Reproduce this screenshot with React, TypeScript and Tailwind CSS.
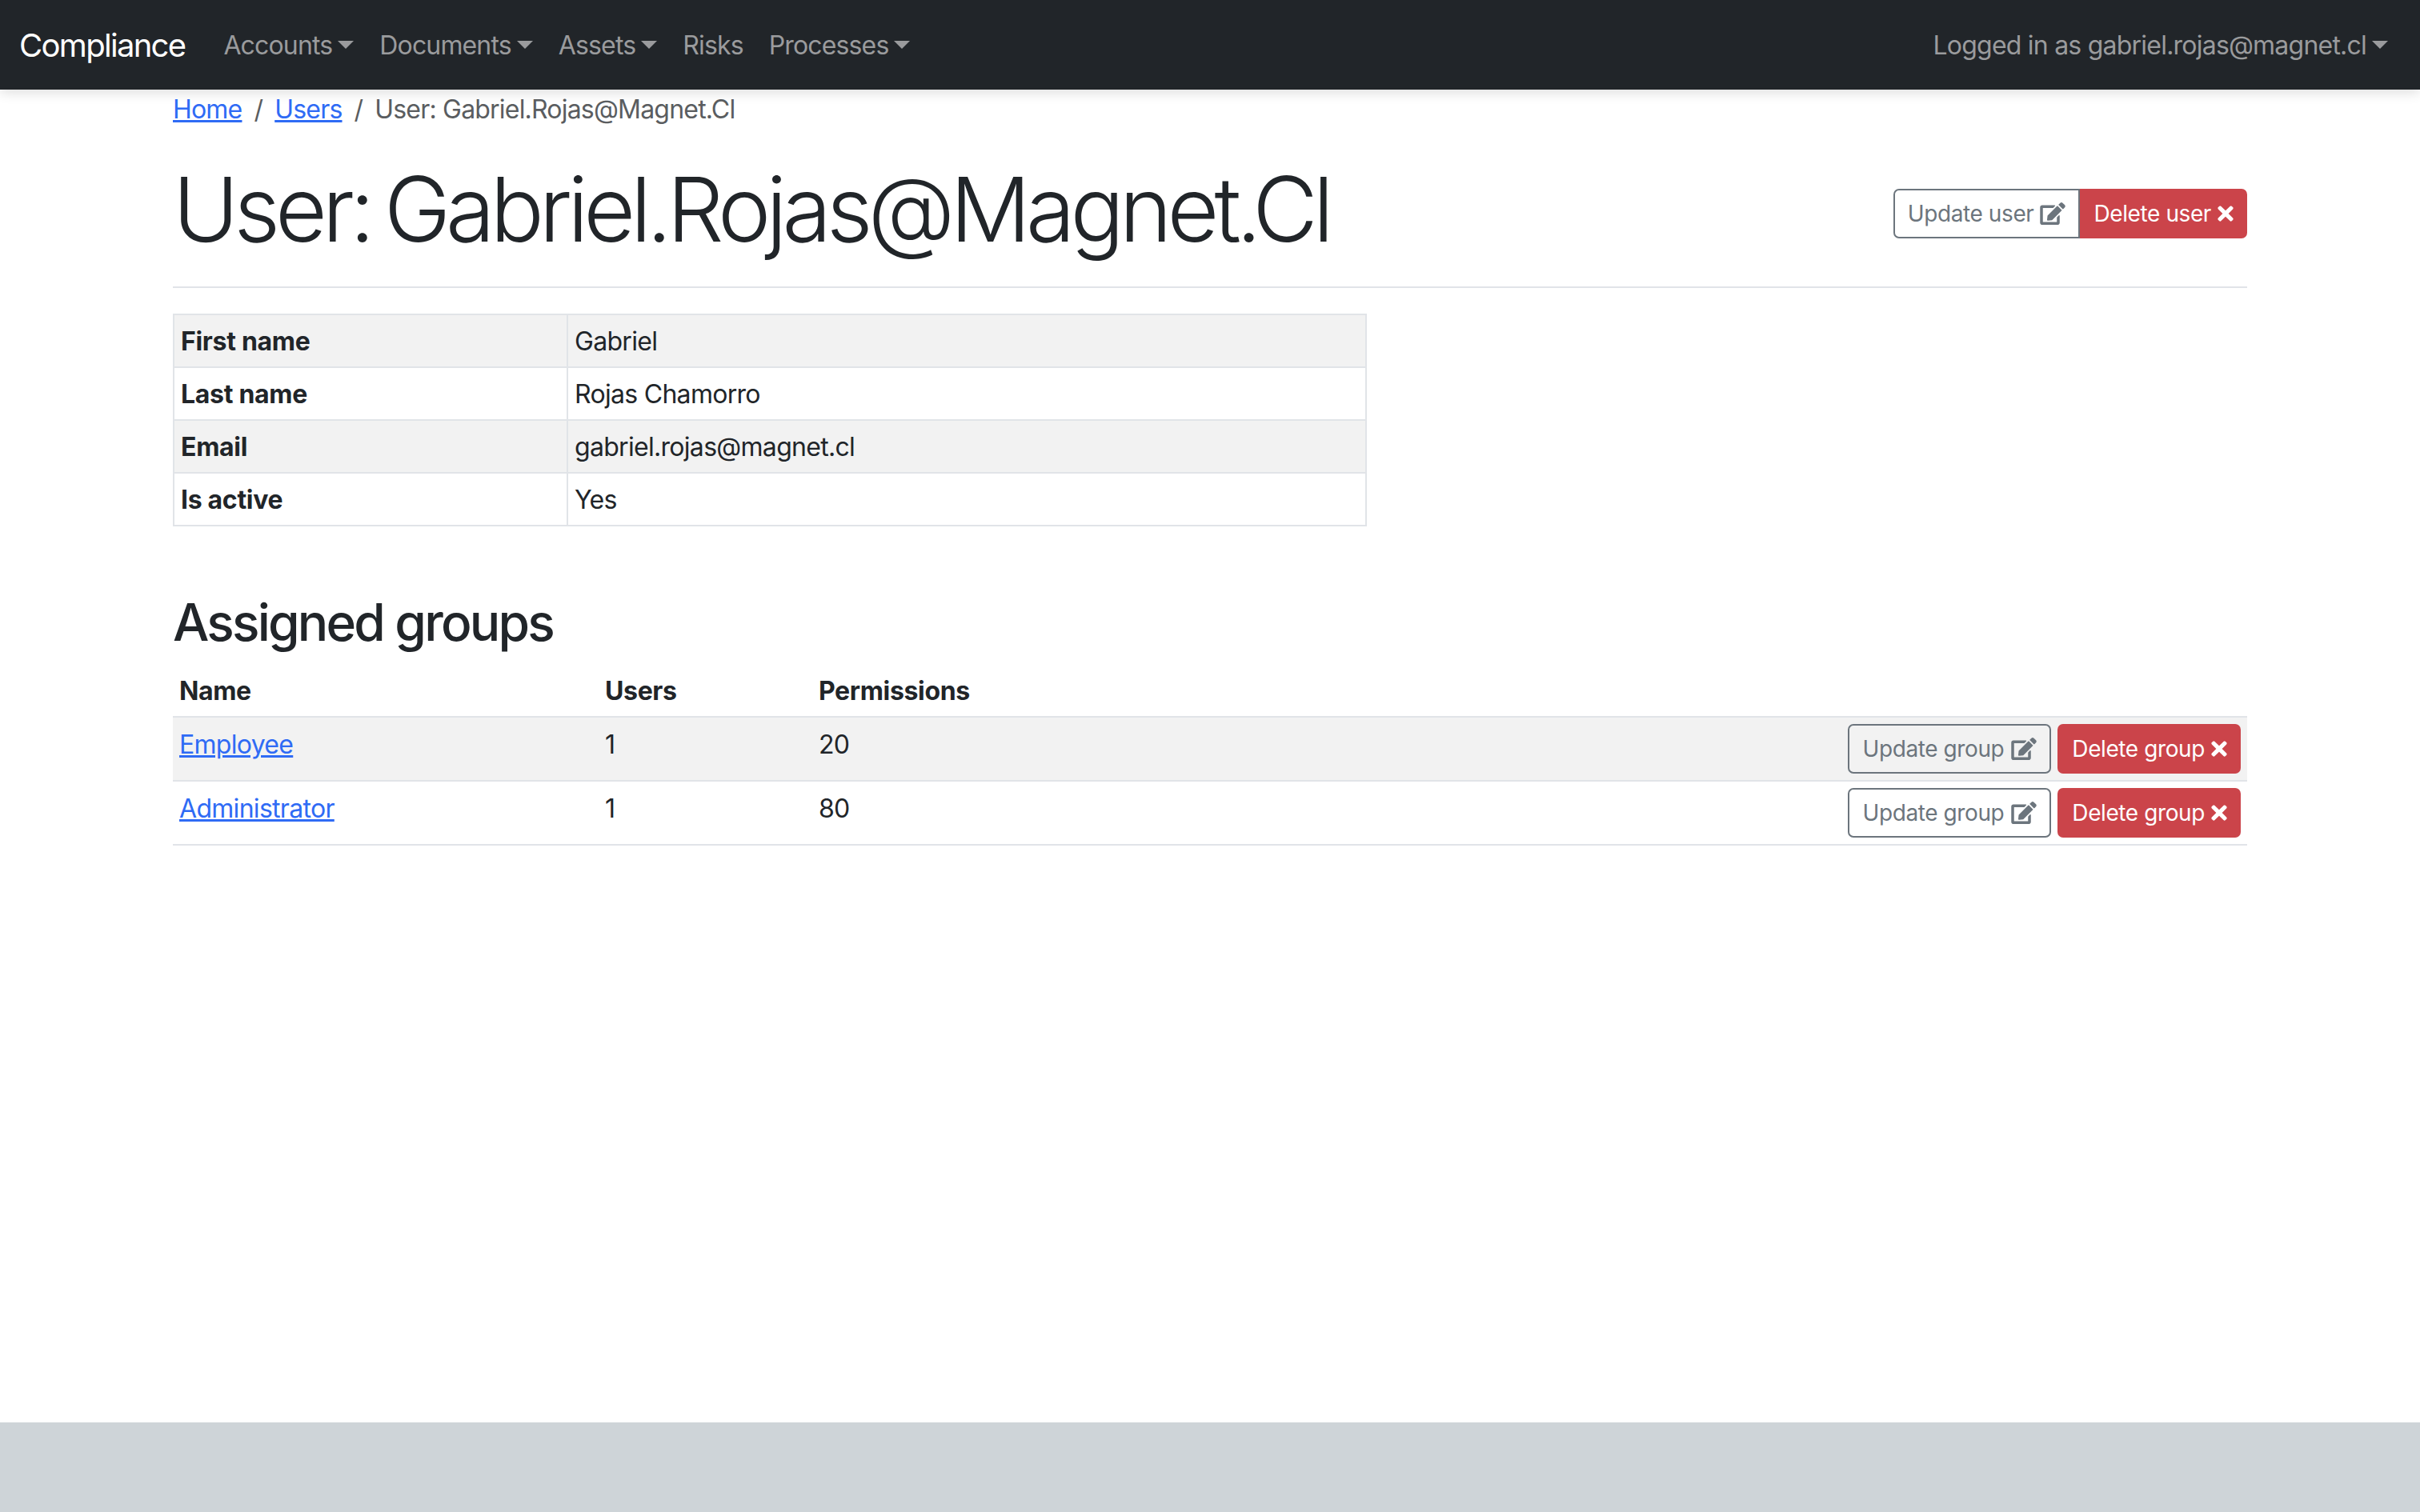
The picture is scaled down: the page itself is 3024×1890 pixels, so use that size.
import { FaEdit, FaTimes } from "react-icons/fa";

function Caret() {
  return <span className="ml-[7px] inline-block h-0 w-0 translate-y-[-1px] border-x-[10px] border-t-[10px] border-x-transparent border-t-current align-middle" />;
}

function NavItem({ label, caret = true }: { label: string; caret?: boolean }) {
  return (
    <span className="flex items-center px-[16px] text-[32px] leading-[48px] tracking-[-0.85px] text-[#9a9b9d]">
      {label}
      {caret && <Caret />}
    </span>
  );
}

function UpdateButton({ label, grouped = false }: { label: string; grouped?: boolean }) {
  return (
    <span className={`flex h-[62px] items-center border-2 border-[#6c757d] pr-[16px] pl-[16px] text-[28px] tracking-[-0.4px] text-[#6c757d] ${grouped ? "gap-[8px] rounded-l-[7px]" : "gap-[9px] rounded-[7px]"}`}>
      {label}
      <FaEdit className="h-[28px] w-[32px]" />
    </span>
  );
}

function DeleteButton({ label, grouped = false }: { label: string; grouped?: boolean }) {
  return (
    <span className={`flex h-[62px] items-center gap-[7px] bg-[#cb444a] pr-[16px] text-[28px] tracking-[-0.4px] text-white ${grouped ? "rounded-r-[7px] pl-[17px]" : "rounded-[7px] pl-[18px]"}`}>
      {label}
      <FaTimes className="h-[28px] w-[22px]" />
    </span>
  );
}

const info = [
  ["First name", "Gabriel"],
  ["Last name", "Rojas Chamorro"],
  ["Email", "gabriel.rojas@magnet.cl"],
  ["Is active", "Yes"],
];

const groups = [
  ["Employee", "1", "20"],
  ["Administrator", "1", "80"],
];

export default function App() {
  return (
    <div className="flex h-[1890px] flex-col bg-white font-['Inter',sans-serif] text-[32px] text-[#212529]">
      <nav className="flex h-[112px] shrink-0 items-center justify-between bg-[#212529] pt-[2px] pr-[40px] pl-[24px] shadow-[0_4px_14px_rgba(0,0,0,0.13)]">
        <div className="flex items-center">
          <span className="mr-[32px] text-[40px] tracking-[-1.7px] text-white">Compliance</span>
          <NavItem label="Accounts" />
          <NavItem label="Documents" />
          <NavItem label="Assets" />
          <NavItem label="Risks" caret={false} />
          <NavItem label="Processes" />
        </div>
        <div className="flex items-center">
          <span className="flex items-center text-[32px] tracking-[-0.78px] text-[#9a9b9d]">
            Logged in as gabriel.rojas@magnet.cl
            <Caret />
          </span>
        </div>
      </nav>

      <main className="mx-[216px] flex-1">
        <div className="flex h-[48px] items-center pt-[2px] tracking-[-0.8px] text-[#5a5d60]">
          <a className="text-[#2f6bf5] underline decoration-[3px]">Home</a>
          <span className="px-[15px]">/</span>
          <a className="text-[#2f6bf5] underline decoration-[3px]">Users</a>
          <span className="px-[15px]">/</span>
          <span>User: Gabriel.Rojas@Magnet.Cl</span>
        </div>

        <div className="mt-[20px] flex h-[180px] items-start justify-between border-b-2 border-[#e1e4e8]">
          <h1 className="pt-[14px] text-[112px] leading-[134px] font-light tracking-[-6.1px] [word-spacing:-8px]">User: Gabriel.Rojas@Magnet.Cl</h1>
          <div className="mt-[56px] flex">
            <UpdateButton label="Update user" grouped />
            <DeleteButton label="Delete user" grouped />
          </div>
        </div>

        <table className="mt-[32px] w-[1492px] table-fixed border-collapse">
          <tbody>
            {info.map(([k, v], i) => (
              <tr key={k} className={i % 2 === 0 ? "bg-[#f2f2f2]" : ""}>
                <th className="h-[66px] w-[492px] border-2 border-[#e1e4e8] px-[8px] pt-[2px] text-left font-bold tracking-[-0.3px]">{k}</th>
                <td className="h-[66px] border-2 border-[#e1e4e8] px-[8px] pt-[2px] tracking-[-0.7px]">{v}</td>
              </tr>
            ))}
          </tbody>
        </table>

        <h2 className="mt-[81px] text-[64px] leading-[77px] font-medium tracking-[-2.8px]">Assigned groups</h2>

        <table className="mt-[20px] w-full table-fixed border-collapse">
          <thead>
            <tr className="border-b-2 border-[#e1e4e8]">
              <th className="h-[60px] w-[532px] px-[8px] pb-[3px] text-left font-bold tracking-[-0.35px]">Name</th>
              <th className="w-[267px] px-[8px] pb-[3px] text-left font-bold tracking-[-0.35px]">Users</th>
              <th className="px-[8px] pb-[3px] text-left font-bold tracking-[-0.35px]">Permissions</th>
              <th className="w-[520px]" />
            </tr>
          </thead>
          <tbody>
            {groups.map(([n, u, p], i) => (
              <tr key={n} className={`border-b-2 border-[#e1e4e8] ${i === 0 ? "bg-[#f2f2f2]" : ""}`}>
                <td className="h-[80px] px-[8px] pt-[10px] align-top tracking-[-0.7px]"><a className="text-[#2f6bf5] underline decoration-[3px]">{n}</a></td>
                <td className="px-[8px] pt-[10px] align-top tracking-[-0.7px]">{u}</td>
                <td className="px-[8px] pt-[10px] align-top tracking-[-0.7px]">{p}</td>
                <td className="px-[8px]">
                  <div className="flex justify-end gap-[8px]">
                    <UpdateButton label="Update group" />
                    <DeleteButton label="Delete group" />
                  </div>
                </td>
              </tr>
            ))}
          </tbody>
        </table>
      </main>

      <footer className="h-[112px] shrink-0 bg-[#ced4d8]" />
    </div>
  );
}
